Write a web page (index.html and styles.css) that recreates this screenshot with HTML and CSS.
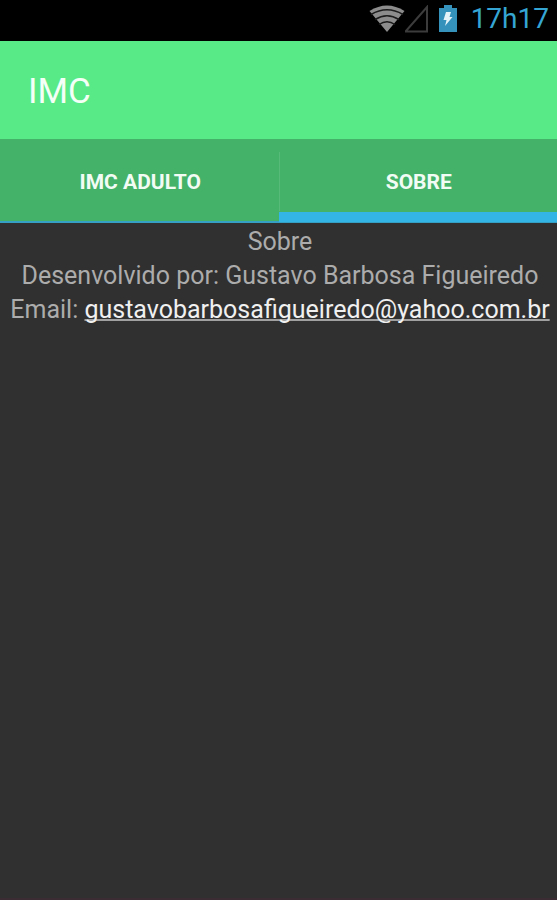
FILE: index.html
```html
<!DOCTYPE html>
<html lang="pt-BR">
<head>
<meta charset="utf-8">
<meta name="viewport" content="width=device-width, initial-scale=1">
<title>IMC</title>
<link rel="stylesheet" href="styles.css">
</head>
<body>
<div class="status-bar">
  <svg class="icon-wifi" viewBox="0 0 36 28" width="36" height="28" aria-hidden="true">
    <path class="wifi-fan" d="M18 27 L0.500 6 Q18 -5 35.500 6 Z"/>
    <path class="wifi-gap" d="M2 9.500 Q18 0 34 9.500 M6 14.500 Q18 7 30 14.500 M10 19.500 Q18 14 26 19.500"/>
  </svg>
  <svg class="icon-signal" viewBox="0 0 26 28" width="26" height="28" aria-hidden="true">
    <path d="M22 2 V26.500 H0.500 Z"/>
  </svg>
  <svg class="icon-battery" viewBox="0 0 18 28" width="18" height="28" aria-hidden="true">
    <path class="battery-body" d="M5 0 H13 V3 H18 V27 H0 V3 H5 Z"/>
    <path class="battery-bolt" d="M7 7 H12 L10.500 12 H13.500 L6 21 L7.500 15 H4.500 Z"/>
  </svg>
  <time class="clock" datetime="17:17">17h17</time>
</div>
<header class="app-bar">
  <h1 class="app-title">IMC</h1>
</header>
<nav class="tabs" role="tablist">
  <button class="tab" type="button" role="tab" aria-selected="false">IMC ADULTO</button>
  <button class="tab tab-active" type="button" role="tab" aria-selected="true">SOBRE</button>
</nav>
<main class="about">
  <p>Sobre</p>
  <p>Desenvolvido por: Gustavo Barbosa Figueiredo</p>
  <p>Email: <a class="email" href="mailto:gustavobarbosafigueiredo@yahoo.com.br">gustavobarbosafigueiredo@yahoo.com.br</a></p>
</main>
</body>
</html>
```
FILE: styles.css
```css
* {
  box-sizing: border-box;
}

body {
  margin: 0;
  min-height: 100vh;
  display: flex;
  flex-direction: column;
  background: #303030;
  color: #acacac;
  font-family: Roboto, "Liberation Sans", sans-serif;
}

.status-bar {
  display: flex;
  justify-content: flex-end;
  align-items: center;
  height: 41px;
  padding: 0 8px 3px;
  background: #000;
}

.icon-wifi .wifi-fan {
  fill: #8c8c8c;
}

.icon-wifi .wifi-gap {
  fill: none;
  stroke: #1c1c1c;
  stroke-width: 1.5;
}

.icon-signal {
  fill: none;
  stroke: #3c3c3c;
  stroke-width: 2;
}

.icon-battery {
  margin: 0 14px 0 8px;
}

.battery-body {
  fill: #3492bb;
}

.battery-bolt {
  fill: #e4f3f8;
}

.clock {
  color: #35a5d4;
  font-size: 28px;
  line-height: 36px;
}

.app-bar {
  display: flex;
  align-items: center;
  height: 98px;
  padding: 3px 28px 0;
  background: #58ea87;
}

.app-title {
  margin: 0;
  color: #f4fff7;
  font-size: 35px;
  font-weight: 400;
  line-height: 42px;
}

.tabs {
  display: flex;
  height: 84px;
  background: #45b269;
  border-bottom: 2px solid #35a0c4;
}

.tab {
  position: relative;
  flex: 1;
  padding: 3px 0 0 2px;
  border: 0;
  background: none;
  color: #f2fcf5;
  font: bold 21px/26px Roboto, "Liberation Sans", sans-serif;
}

.tab + .tab::before {
  content: "";
  position: absolute;
  top: 13px;
  bottom: 10px;
  left: 0;
  width: 1px;
  background: #58ba78;
}

.tab-active::after {
  content: "";
  position: absolute;
  right: 0;
  bottom: -1px;
  left: 0;
  height: 10px;
  background: #33b5e5;
}

.about {
  flex: 1;
  padding: 2px 0 0 3px;
  border-bottom: 2px solid #3b2c33;
  font-size: 25px;
  line-height: 34px;
  text-align: center;
}

.about p {
  margin: 0;
}

.email {
  color: #f0f0f0;
  text-decoration-color: #a0a0a0;
  text-decoration-thickness: 2px;
  text-decoration-skip-ink: none;
}
```
